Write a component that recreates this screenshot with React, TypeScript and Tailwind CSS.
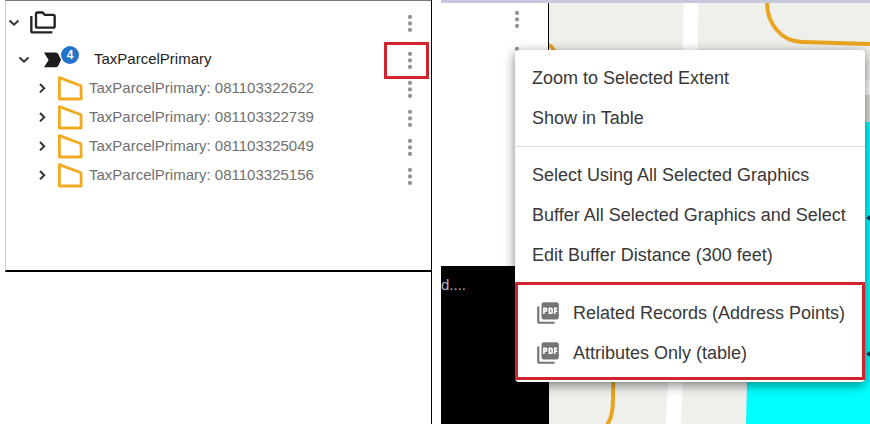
import { MdOutlineFolderCopy, MdPictureAsPdf } from "react-icons/md";

type ChevronProps = {
    open?: boolean;
};

type MenuItemProps = {
    label: string;
    pdf?: boolean;
};

const parcels = ["081103322622", "081103322739", "081103325049", "081103325156"];

const Chevron: React.FC<ChevronProps> = ({ open }) => (
    <svg viewBox="0 0 12 12" className="size-3" fill="none" stroke="#333" strokeWidth="2">
        {open ? <path d="M1.5 3.5 6 7.7 10.5 3.5" /> : <path d="M4 1 8.2 5.2 4 9.4" />}
    </svg>
);

const MoreButton = () => (
    <button type="button" aria-label="More options" className="flex w-6 shrink-0 justify-center">
        <svg viewBox="0 0 6 20" className="h-5 w-1.5" fill="#949494">
            <circle cx="3" cy="3.9" r="2.1" />
            <circle cx="3" cy="10.4" r="2.1" />
            <circle cx="3" cy="16.9" r="2.1" />
        </svg>
    </button>
);

const LayerIcon = () => (
    <svg viewBox="0 0 24 24" className="size-6" fill="#1c1c1c">
        <path d="M3 4.5h11.5q1.9 0 2.8 1.5l2.7 5.8-2.7 5.9q-.9 1.6-2.8 1.6H3l4.6-7.4z" />
    </svg>
);

const ParcelIcon = () => (
    <svg viewBox="0 0 26 26" className="size-[26px]" fill="none" stroke="#f0ab22" strokeWidth="2.8" strokeLinejoin="round">
        <path d="M2.4 1.6v21.4h21.8L24 9.8z" />
    </svg>
);

const LayerTree = () => (
    <div className="ml-[5px] border-t border-b-2 border-l border-t-[#777] border-b-black border-l-[#c9cbdc] pr-[9px] pb-[80px]">
        <div className="flex h-[44px] items-center">
            <button type="button" aria-label="Collapse layers" className="ml-[2px]">
                <Chevron open />
            </button>
            <MdOutlineFolderCopy className="ml-[9px] size-7 text-[#222]" />
            <div className="ml-auto">
                <MoreButton />
            </div>
        </div>

        <div className="flex h-[29px] items-center">
            <button type="button" aria-label="Collapse TaxParcelPrimary" className="ml-[12px]">
                <Chevron open />
            </button>
            <div className="relative ml-[11px]">
                <LayerIcon />
                <span className="absolute -top-[2px] left-[20px] flex size-[18px] items-center justify-center rounded-full bg-[#2373cb] text-xs font-bold text-white">
                    4
                </span>
            </div>
            <span className="ml-[29px] text-[15px] text-[#222]">TaxParcelPrimary</span>
            <div className="relative ml-auto">
                <MoreButton />
                {/* Highlight around the menu button */}
                <div className="pointer-events-none absolute -top-[8px] -right-[7px] h-[37px] w-[45px] border-3 border-[#d0252f]" />
            </div>
        </div>

        {parcels.map((parcel) => (
            <div key={parcel} className="flex h-[29px] items-center">
                <button type="button" aria-label={`Expand ${parcel}`} className="ml-[30px]">
                    <Chevron />
                </button>
                <div className="ml-[9px]">
                    <ParcelIcon />
                </div>
                <span className="ml-[6px] text-[15px] whitespace-nowrap text-[#707070]">TaxParcelPrimary: {parcel}</span>
                <div className="ml-auto">
                    <MoreButton />
                </div>
            </div>
        ))}
    </div>
);

const MapView = () => (
    <svg viewBox="0 0 321 422" preserveAspectRatio="xMinYMin slice" className="h-full w-full" fill="none">
        <path fill="#efefec" d="M0 0h321v422H0z" />
        <path fill="#e0e0dc" d="M308 92h13v28h-13z" />
        <path stroke="#fff" strokeWidth="15" d="M142 0 139 180 124 422" />
        <path stroke="#fff" strokeWidth="15" d="M308 84h13" />
        <path fill="#00ffff" d="M200 119h121v303H197l1-42z" />
        <g stroke="#e9a51f" strokeWidth="4">
            <path d="M218 0c0 20 14 39 36 39l67 2" />
            <path d="M0 42q6 3 6 12" />
            <path d="M65 330l-1 66q0 18-6 26" />
        </g>
        <path fill="#134" d="m321 348-4 3 4 3zM321 212l-4 3 4 3z" />
    </svg>
);

const MenuItem: React.FC<MenuItemProps> = ({ label, pdf }) => (
    <button type="button" role="menuitem" className="flex h-10 w-full items-center gap-3 px-[17px] text-left whitespace-nowrap">
        {pdf && <MdPictureAsPdf className="size-[26px] shrink-0 text-[#757575]" />}
        {label}
    </button>
);

const ContextMenu = () => (
    <div
        role="menu"
        className="absolute top-[47px] right-[5px] left-[74px] rounded-sm bg-white pt-2 pb-[2px] text-[18px] text-[#383838] shadow-[0_3px_12px_rgba(0,0,0,0.5)]"
    >
        <MenuItem label="Zoom to Selected Extent" />
        <MenuItem label="Show in Table" />
        <hr className="my-2 border-[#dedede]" />
        <MenuItem label="Select Using All Selected Graphics" />
        <MenuItem label="Buffer All Selected Graphics and Select" />
        <MenuItem label="Edit Buffer Distance (300 feet)" />
        <div className="mt-[7px] border-3 border-[#d0252f] pt-2 pb-1">
            <MenuItem label="Related Records (Address Points)" pdf />
            <MenuItem label="Attributes Only (table)" pdf />
        </div>
    </div>
);

const App = () => {
    return (
        <main className="flex min-h-screen gap-[9px] bg-white font-['Liberation_Sans',Arial,sans-serif]">
            <section className="min-w-0 flex-[431] border-r border-black">
                <LayerTree />
            </section>

            <section className="relative flex min-w-0 flex-[429] flex-col border-t-3 border-[#c6c9de]">
                <div className="flex flex-1">
                    <div className="flex w-[108px] shrink-0 flex-col">
                        <div className="flex h-[263px] flex-col items-end gap-4 border-r border-black pt-[6px] pr-[19px]">
                            <MoreButton />
                            <MoreButton />
                        </div>
                        <div className="flex-1 overflow-hidden bg-black pt-2 text-[15px] text-[#b5b5b5]">d....</div>
                    </div>
                    <div className="min-w-0 flex-1">
                        <MapView />
                    </div>
                </div>
                <ContextMenu />
            </section>
        </main>
    );
};

export default App;
